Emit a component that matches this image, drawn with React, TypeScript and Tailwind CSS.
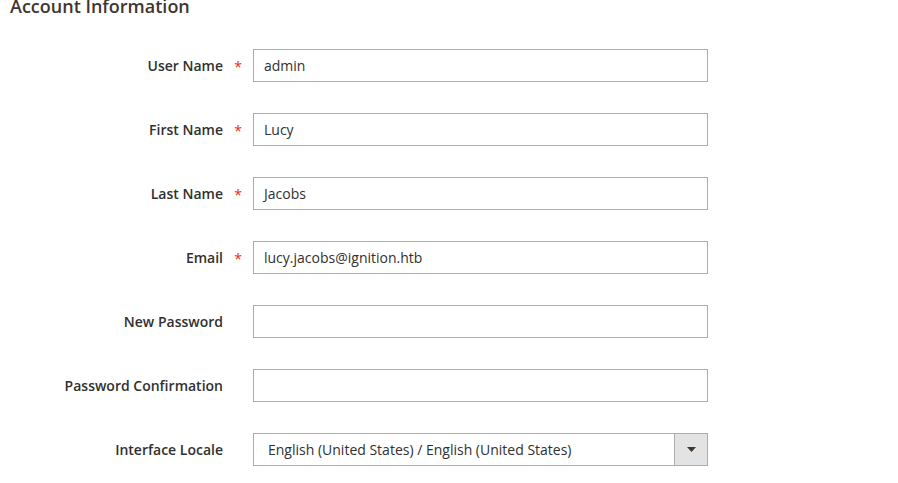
const FIELDS = [
  { label: "User Name", value: "admin", required: true },
  { label: "First Name", value: "Lucy", required: true },
  { label: "Last Name", value: "Jacobs", required: true },
  { label: "Email", value: "lucy.jacobs@ignition.htb", required: true },
  { label: "New Password", value: "", required: false },
  { label: "Password Confirmation", value: "", required: false },
];

export default function App() {
  return (
    <div className="min-h-[483px] w-[898px] bg-white font-['Open_Sans',sans-serif] text-[#303030]">
      {/* Section title */}
      <h2 className="-mt-[3px] pl-[10px] text-[18px] leading-[18px] font-semibold text-[#41362f]">
        Account Information
      </h2>

      <div className="mt-[34px] flex flex-col gap-[31px]">
        {FIELDS.map((f) => (
          <div key={f.label} className="flex items-center">
            <label className="w-[223px] text-right text-[14px] font-semibold">{f.label}</label>
            <span className="flex w-[30px] justify-center pt-[2px] text-[14px] text-[#e22626]">
              {f.required ? "*" : ""}
            </span>
            <div className="flex h-[33px] w-[455px] items-center border border-[#adadad] px-[10px] text-[14px]">
              {f.value}
            </div>
          </div>
        ))}

        {/* Locale select */}
        <div className="flex items-center">
          <label className="w-[223px] text-right text-[14px] font-semibold">Interface Locale</label>
          <span className="w-[30px]" />
          <div className="flex h-[33px] w-[455px] border border-[#adadad] text-[14px]">
            <div className="flex flex-1 items-center pl-[14px]">
              English (United States) / English (United States)
            </div>
            <div className="flex w-[33px] items-center justify-center border-l border-[#adadad] bg-[#e3e3e3]">
              <svg width="9" height="5" viewBox="0 0 9 5">
                <path d="M0 0h9L4.5 5z" fill="#41362f" />
              </svg>
            </div>
          </div>
        </div>
      </div>
    </div>
  );
}
